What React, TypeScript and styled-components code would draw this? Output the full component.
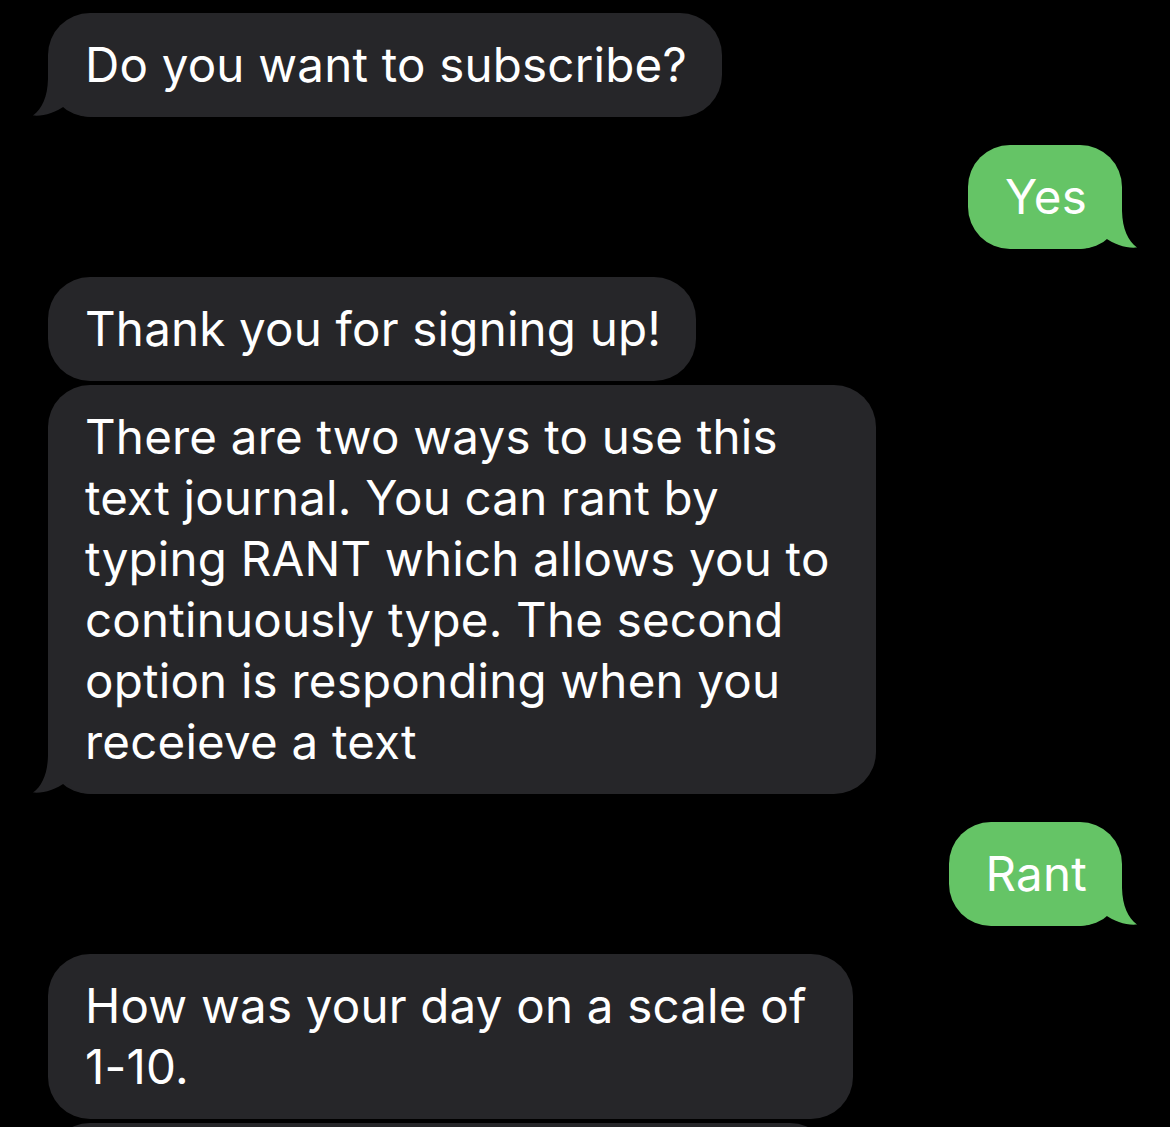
import React from "react";
import styled, { createGlobalStyle } from "styled-components";

const GlobalStyle = createGlobalStyle`
  html, body {
    margin: 0;
    padding: 0;
    background: #000;
    height: 1127px;
    overflow: hidden;
  }
  body {
    font-family: Inter, "Noto Sans", "Liberation Sans", sans-serif;
    -webkit-font-smoothing: antialiased;
  }
`;

const Thread = styled.div`
  display: flex;
  flex-direction: column;
  padding: 13px 48px 0 48px;
`;

const Group = styled.div<{ $out?: boolean }>`
  display: flex;
  flex-direction: column;
  align-items: ${(p) => (p.$out ? "flex-end" : "flex-start")};
  gap: 4px;
  margin-bottom: 28px;
`;

const Bubble = styled.div<{ $out?: boolean; $wrapped?: boolean }>`
  position: relative;
  box-sizing: border-box;
  background: ${(p) => (p.$out ? "#65c466" : "#262629")};
  color: #fff;
  border-radius: 42px;
  padding: 21px ${(p) => (p.$wrapped ? "46px" : "35px")} 22px 37px;
  font-size: 47.5px;
  line-height: 61px;
  letter-spacing: 0.2px;
  font-weight: 400;
  white-space: nowrap;
`;

const PartialBubble = styled.div`
  box-sizing: border-box;
  width: 784px;
  height: 104px;
  background: #262629;
  border-radius: 42px;
`;

const Line = styled.span`
  position: relative;
  display: block;
`;

const Tail = styled.svg<{ $out?: boolean }>`
  position: absolute;
  bottom: 0;
  width: 62px;
  height: 46px;
  ${(p) =>
    p.$out
      ? "right: -16px; transform: scaleX(-1);"
      : "left: -16px;"}
`;

const BubbleTail: React.FC<{ out?: boolean }> = ({ out }) => (
  <Tail $out={out} viewBox="0 0 62 46" aria-hidden>
    <path
      d="M16 0 L16 8 C15.5 26 10 38 1 44.5 C11 45.5 23 42 34 34 C40 42 48 46 62 46 L62 0 Z"
      fill={out ? "#65c466" : "#262629"}
    />
  </Tail>
);

type Msg = { lines: string[]; tail?: boolean; wrapped?: boolean };

const groups: { out?: boolean; msgs: Msg[]; more?: boolean }[] = [
  { msgs: [{ lines: ["Do you want to subscribe?"], tail: true }] },
  { out: true, msgs: [{ lines: ["Yes"], tail: true }] },
  {
    msgs: [
      { lines: ["Thank you for signing up!"] },
      {
        lines: [
          "There are two ways to use this",
          "text journal. You can rant by",
          "typing RANT which allows you to",
          "continuously type. The second",
          "option is responding when you",
          "receieve a text",
        ],
        tail: true,
        wrapped: true,
      },
    ],
  },
  { out: true, msgs: [{ lines: ["Rant"], tail: true }] },
  {
    msgs: [{ lines: ["How was your day on a scale of", "1-10."], wrapped: true }],
    more: true,
  },
];

export default function App() {
  return (
    <>
      <GlobalStyle />
      <Thread>
        {groups.map((g, gi) => (
          <Group key={gi} $out={g.out}>
            {g.msgs.map((m, mi) => (
              <Bubble key={mi} $out={g.out} $wrapped={m.wrapped}>
                {m.tail && <BubbleTail out={g.out} />}
                {m.lines.map((l, li) => (
                  <Line key={li}>{l}</Line>
                ))}
              </Bubble>
            ))}
            {g.more && <PartialBubble />}
          </Group>
        ))}
      </Thread>
    </>
  );
}
